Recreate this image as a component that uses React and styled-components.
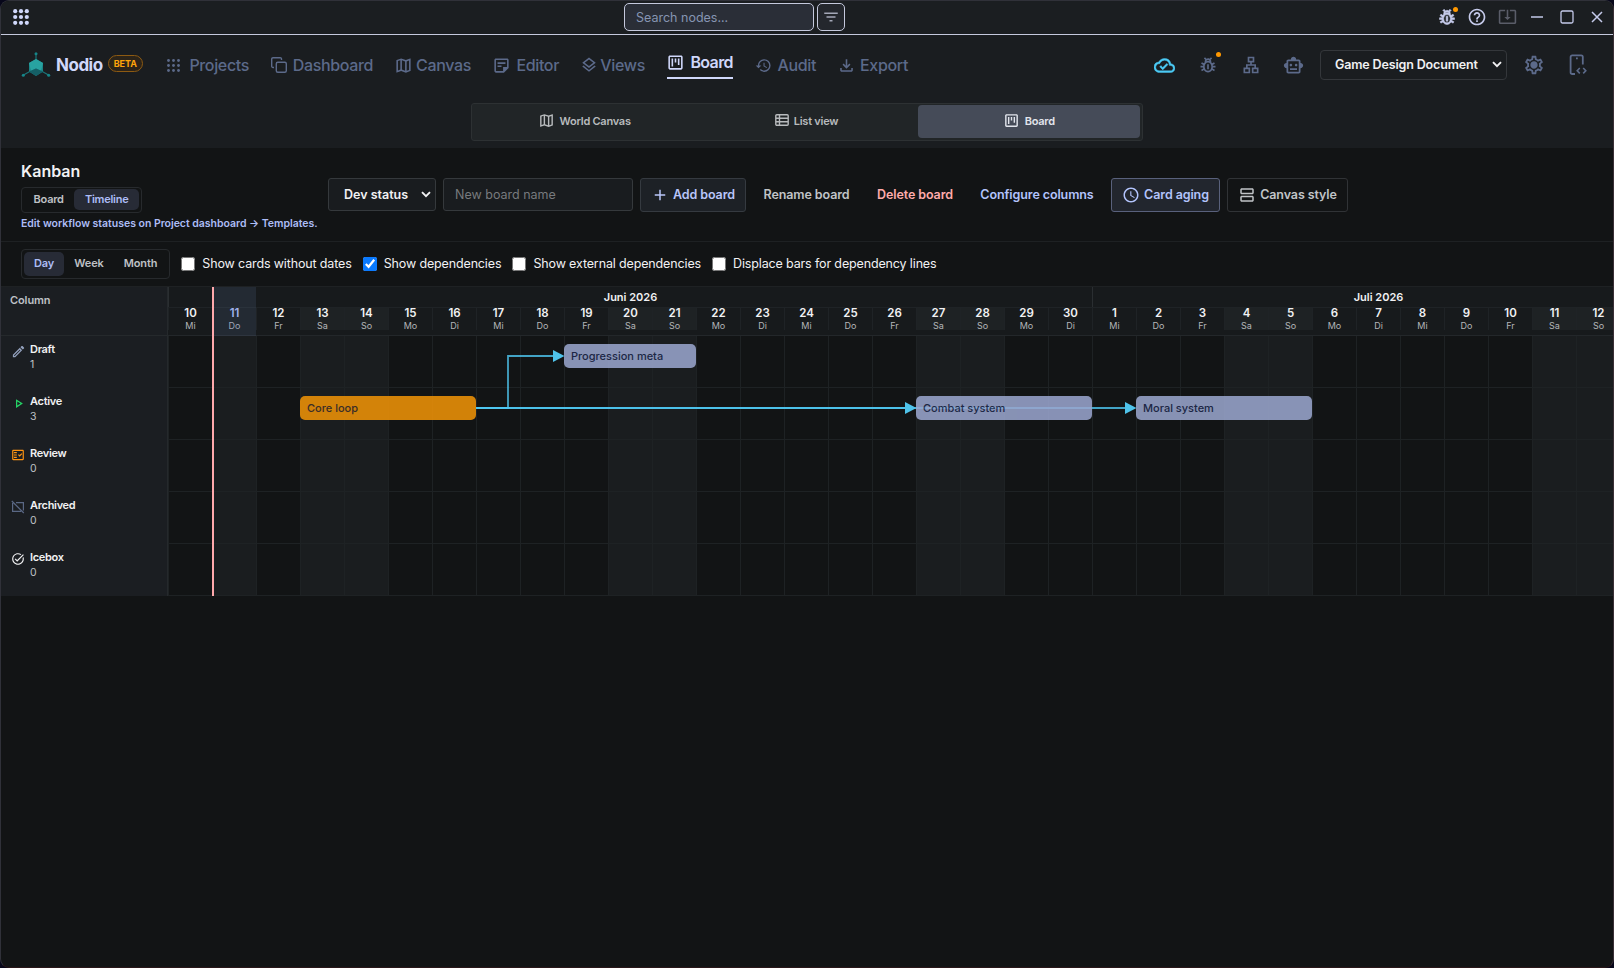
import styled, { createGlobalStyle } from "styled-components";
import {
  MdOutlineMap,
  MdOutlineStickyNote2,
  MdOutlineLayers,
  MdOutlineViewKanban,
  MdHistory,
  MdOutlineFileDownload,
  MdOutlinePestControl,
  MdHelpOutline,
  MdSystemUpdateAlt,
  MdOutlineCloudDone,
  MdOutlineLan,
  MdOutlineSmartToy,
  MdOutlineSettings,
  MdOutlineFactCheck,
  MdTaskAlt,
  MdOutlineEdit,
  MdOutlinePlayArrow,
  MdSchedule,
  MdOutlineViewAgenda,
  MdFilterList,
  MdAdd,
} from "react-icons/md";

const DAY_WIDTH = 44;
const ROW_HEIGHT = 52;
const WEEKDAYS = ["Mi", "Do", "Fr", "Sa", "So", "Mo", "Di"];

const days = Array.from({ length: 33 }, (_, i) => ({
  num: i < 21 ? i + 10 : i - 20,
  name: WEEKDAYS[i % 7],
  weekend: i % 7 === 3 || i % 7 === 4,
  today: i === 1,
}));

const AppsIcon = () => (
  <svg width="16" height="16" viewBox="0 0 16 16" fill="currentColor">
    {[2.2, 8, 13.8].map((y) =>
      [2.2, 8, 13.8].map((x) => <circle key={`${x}-${y}`} cx={x} cy={y} r="2.1" />)
    )}
  </svg>
);

const ProjectsIcon = () => (
  <svg width="14" height="13" viewBox="-1 0 14 13" fill="currentColor">
    {[1.5, 6.5, 11.5].map((y) =>
      [1.5, 6.5, 11.5].map((x) => <circle key={`${x}-${y}`} cx={x} cy={y} r="1.4" />)
    )}
  </svg>
);

const CopyIcon = () => (
  <svg width="16" height="16" viewBox="0 0 16 16" fill="none" stroke="currentColor" strokeWidth="1.4">
    <rect x="5.3" y="5.3" width="10" height="10" rx="1.5" />
    <path d="M3 10.5H2A1.3 1.3 0 0 1 .7 9.2V2A1.3 1.3 0 0 1 2 .7h7.2A1.3 1.3 0 0 1 10.5 2v1" />
  </svg>
);

const ListIcon = () => (
  <svg width="14" height="14" viewBox="0 0 14 14" fill="none" stroke="currentColor" strokeWidth="1.4">
    <rect x=".8" y="1.8" width="12.4" height="10.4" rx="1" />
    <path d="M1 5.3h12M1 8.7h12M4.5 2v10" />
  </svg>
);

const SettingsIcon = () => (
  <svg width="22" height="22" viewBox="0 0 22 22">
    <MdOutlineSettings size={22} />
    <circle cx="11" cy="11" r="3" fill="currentColor" />
  </svg>
);

const PhoneCodeIcon = () => (
  <svg width="18" height="22" viewBox="0 0 18 22" fill="none" stroke="currentColor" strokeWidth="1.8">
    <path d="M6 20H3.2A1.6 1.6 0 0 1 1.6 18.4V3A1.6 1.6 0 0 1 3.2 1.4h9A1.6 1.6 0 0 1 13.8 3v7.5" />
    <path d="M7 4.4h1.8M10.8 14l-2.6 2.7 2.6 2.7M14.2 14l2.6 2.7-2.6 2.7" strokeWidth="1.6" />
  </svg>
);

const ArchivedIcon = () => (
  <svg width="14" height="14" viewBox="0 0 14 14" fill="none" stroke="currentColor" strokeWidth="1.2">
    <path d="M5 2.6h7.4v8M10 11.4H1.6V2.9M.8 1l12 12" />
  </svg>
);

const Logo = () => (
  <svg width="30" height="26" viewBox="0 0 30 26">
    <path d="M15 2v8M15 16 2.5 23M15 16l12.5 7" stroke="#1b7478" strokeWidth="1.2" />
    <path d="m15 7 7 4v8.5L15 24l-7-4.5V11z" fill="#1b8587" />
    <path d="m15 7 7 4-2 8-5-2.5-5 2.5-2-8z" fill="#28a3a1" />
    <path d="m15 16.5 7 3-7 4.5-7-4.5z" fill="#155f66" />
    <circle cx="15" cy="1.8" r="1.5" fill="#168688" />
    <circle cx="2.3" cy="23.3" r="1.5" fill="#168688" />
    <circle cx="27.7" cy="23.3" r="1.5" fill="#168688" />
  </svg>
);

const Chevron = () => (
  <svg width="10" height="7" viewBox="0 0 10 7" fill="none" stroke="#f1f1f3" strokeWidth="1.9">
    <path d="m1 1.2 4 4 4-4" />
  </svg>
);

const navItems = [
  { label: "Projects", icon: <ProjectsIcon />, width: 83 },
  { label: "Dashboard", icon: <CopyIcon />, width: 102 },
  { label: "Canvas", icon: <MdOutlineMap size={19} />, width: 76, inset: true },
  { label: "Editor", icon: <MdOutlineStickyNote2 size={19} />, width: 66, inset: true },
  { label: "Views", icon: <MdOutlineLayers size={18} />, width: 64, inset: true },
  { label: "Board", icon: <MdOutlineViewKanban size={19} />, active: true, width: 66, inset: true },
  { label: "Audit", icon: <MdHistory size={17} />, width: 61 },
  { label: "Export", icon: <MdOutlineFileDownload size={19} />, width: 70, inset: true },
];

const rows = [
  { name: "Draft", count: 1, icon: <MdOutlineEdit size={15} />, color: "#93a1bd" },
  { name: "Active", count: 3, icon: <MdOutlinePlayArrow size={15} />, color: "#25d366" },
  { name: "Review", count: 0, icon: <MdOutlineFactCheck size={14} />, color: "#ff9412" },
  { name: "Archived", count: 0, icon: <ArchivedIcon />, color: "#5a6885" },
  { name: "Icebox", count: 0, icon: <MdTaskAlt size={14} />, color: "#f1f1f3" },
];

const bars = [
  { label: "Progression meta", row: 0, start: 9, length: 3 },
  { label: "Core loop", row: 1, start: 3, length: 4, active: true },
  { label: "Combat system", row: 1, start: 17, length: 4 },
  { label: "Moral system", row: 1, start: 22, length: 4 },
];

const options = [
  { label: "Show cards without dates" },
  { label: "Show dependencies", checked: true },
  { label: "Show external dependencies" },
  { label: "Displace bars for dependency lines" },
];

export default function App() {
  return (
    <>
      <GlobalStyle />
      <Window>
        <TitleBar>
          <AppsButton>
            <AppsIcon />
          </AppsButton>
          <SearchGroup>
            <SearchInput placeholder="Search nodes..." />
            <FilterButton>
              <MdFilterList size={18} />
            </FilterButton>
          </SearchGroup>
          <WindowControls>
            <IconCell $heavy>
              <MdOutlinePestControl size={20} />
              <Dot />
            </IconCell>
            <IconCell>
              <MdHelpOutline size={20} />
            </IconCell>
            <IconCell $dim>
              <MdSystemUpdateAlt size={19} />
            </IconCell>
            <IconCell>
              <svg width="12" height="2" viewBox="0 0 12 2">
                <path d="M0 1h12" stroke="currentColor" strokeWidth="1.5" />
              </svg>
            </IconCell>
            <IconCell>
              <svg width="14" height="14" viewBox="0 0 14 14" fill="none" stroke="currentColor" strokeWidth="1.3">
                <rect x="1" y="1" width="12" height="12" rx="1.5" />
              </svg>
            </IconCell>
            <IconCell>
              <svg width="12" height="12" viewBox="0 0 12 12" stroke="currentColor" strokeWidth="1.5">
                <path d="m1 1 10 10M11 1 1 11" />
              </svg>
            </IconCell>
          </WindowControls>
        </TitleBar>

        <Header>
          <NavRow>
            <Brand>
              <Logo />
              <BrandName>Nodio</BrandName>
              <Beta>BETA</Beta>
            </Brand>
            <Nav>
              {navItems.map((item) => (
                <NavItem key={item.label} $active={item.active} $width={item.width} $inset={item.inset}>
                  {item.icon}
                  <span>{item.label}</span>
                </NavItem>
              ))}
            </Nav>
            <Tools>
              <Tool $cloud>
                <MdOutlineCloudDone size={21} />
              </Tool>
              <Tool>
                <MdOutlinePestControl size={20} />
                <Dot $large />
              </Tool>
              <Tool>
                <MdOutlineLan size={20} />
              </Tool>
              <Tool>
                <MdOutlineSmartToy size={21} />
              </Tool>
              <ProjectSelect>
                Game Design Document
                <Chevron />
              </ProjectSelect>
              <Tool $wide>
                <SettingsIcon />
              </Tool>
              <Tool $wide>
                <PhoneCodeIcon />
              </Tool>
            </Tools>
          </NavRow>
          <ViewSwitch>
            <ViewTab>
              <MdOutlineMap size={17} />
              World Canvas
            </ViewTab>
            <ViewTab>
              <ListIcon />
              List view
            </ViewTab>
            <ViewTab $active>
              <MdOutlineViewKanban size={17} />
              Board
            </ViewTab>
          </ViewSwitch>
        </Header>

        <Toolbar>
          <TitleBlock>
            <Title>Kanban</Title>
            <Segment>
              <SegmentItem>Board</SegmentItem>
              <SegmentItem $active>Timeline</SegmentItem>
            </Segment>
            <TemplateLink>Edit workflow statuses on Project dashboard → Templates.</TemplateLink>
          </TitleBlock>
          <Actions>
            <BoardSelect>
              Dev status
              <Chevron />
            </BoardSelect>
            <NameInput placeholder="New board name" />
            <Action $kind="primary" $width={106}>
              <MdAdd size={18} />
              Add board
            </Action>
            <Action $kind="plain" $width={107}>Rename board</Action>
            <Action $kind="danger" $width={96}>Delete board</Action>
            <Action $kind="link" $width={134}>Configure columns</Action>
            <Action $kind="toggled" $width={109}>
              <MdSchedule size={18} />
              Card aging
            </Action>
            <Action $kind="outline" $width={121}>
              <MdOutlineViewAgenda size={18} />
              Canvas style
            </Action>
          </Actions>
        </Toolbar>

        <OptionsBar>
          <Segment $large>
            <SegmentItem $active $large>Day</SegmentItem>
            <SegmentItem $large>Week</SegmentItem>
            <SegmentItem $large>Month</SegmentItem>
          </Segment>
          {options.map((option) => (
            <Option key={option.label}>
              <input type="checkbox" defaultChecked={option.checked} />
              {option.label}
            </Option>
          ))}
        </OptionsBar>

        <Timeline>
          <Labels>
            <LabelsHead>Column</LabelsHead>
            {rows.map((row) => (
              <RowLabel key={row.name} $color={row.color}>
                <RowIcon>{row.icon}</RowIcon>
                <div>
                  <RowName>{row.name}</RowName>
                  <RowCount>{row.count}</RowCount>
                </div>
              </RowLabel>
            ))}
          </Labels>
          <Chart>
            <ChartHead>
              <Months>
                <Month $days={21}>Juni 2026</Month>
                <Month $days={13}>Juli 2026</Month>
              </Months>
              <DayRow>
                {days.map((day, index) => (
                  <DayHead key={index} $weekend={day.weekend} $today={day.today}>
                    <strong>{day.num}</strong>
                    <span>{day.name}</span>
                  </DayHead>
                ))}
              </DayRow>
            </ChartHead>
            <ChartBody>
              {rows.map((row) => (
                <GridRow key={row.name}>
                  {days.map((day, index) => (
                    <GridCell key={index} $shaded={day.weekend || day.today} />
                  ))}
                </GridRow>
              ))}
              <Links width="1445" height="260" viewBox="0 0 1445 260">
                <path d="M308 72h32V20h46" />
                <path d="M308 72h430" />
                <path d="M308 72h650" />
                <polygon points="385,14 396.5,20 385,26" />
                <polygon points="737,66 748.5,72 737,78" />
                <polygon points="957,66 968.5,72 957,78" />
              </Links>
              {bars.map((bar) => (
                <Bar
                  key={bar.label}
                  $active={bar.active}
                  style={{
                    left: bar.start * DAY_WIDTH,
                    top: bar.row * ROW_HEIGHT + 8,
                    width: bar.length * DAY_WIDTH,
                  }}
                >
                  {bar.label}
                </Bar>
              ))}
            </ChartBody>
            <TodayTint />
            <TodayLine />
          </Chart>
        </Timeline>
      </Window>
    </>
  );
}

const GlobalStyle = createGlobalStyle`
  * {
    box-sizing: border-box;
  }

  body {
    margin: 0;
    background: #07071a;
    color: #f1f1f3;
    font-family: Inter, sans-serif;
    overflow: hidden;
  }

  svg {
    display: block;
    flex-shrink: 0;
  }

  input {
    font-family: inherit;
  }
`;

const Window = styled.div`
  height: 968px;
  display: flex;
  flex-direction: column;
  border: 1px solid #303139;
  border-right-color: #3a2f36;
  border-bottom-color: #2a1719;
  border-radius: 9px;
  background: #121415;
  overflow: hidden;
`;

const TitleBar = styled.div`
  height: 34px;
  flex-shrink: 0;
  display: flex;
  align-items: center;
  padding-bottom: 2px;
  background: #1b1e21;
  border-bottom: 1px solid #c5c9dd;
`;

const AppsButton = styled.div`
  width: 623px;
  padding-left: 12px;
  color: #d0d8fb;
`;

const SearchGroup = styled.div`
  display: flex;
  gap: 3px;
`;

const SearchInput = styled.input`
  width: 190px;
  height: 28px;
  padding: 1px 10px 0 11px;
  border: 1px solid #c5c9dd;
  border-radius: 5px;
  background: #2a2e37;
  font-size: 12.5px;

  &::placeholder {
    color: #8695b2;
  }
`;

const FilterButton = styled.div`
  width: 28px;
  height: 28px;
  display: grid;
  place-items: center;
  border: 1px solid #c5c9dd;
  border-radius: 5px;
  background: #24272d;
  color: #a4a8b8;
`;

const WindowControls = styled.div`
  display: flex;
  margin-left: auto;
  padding-right: 1px;
`;

const IconCell = styled.div`
  position: relative;
  width: 30px;
  height: 24px;
  display: grid;
  place-items: center;
  color: ${({ $dim }) => ($dim ? "#5a5d69" : "#c5caea")};

  path:not([fill="none"]) {
    stroke: ${({ $heavy }) => ($heavy ? "currentColor" : "")};
    stroke-width: ${({ $heavy }) => ($heavy ? "0.7px" : "")};
  }
`;

const Dot = styled.span`
  position: absolute;
  top: ${({ $large }) => ($large ? "-3px" : "2px")};
  right: ${({ $large }) => ($large ? "8px" : "4px")};
  width: 5px;
  height: 5px;
  border-radius: 50%;
  background: #ff9800;
`;

const Header = styled.header`
  height: 113px;
  flex-shrink: 0;
  background: #1a1d20;
`;

const NavRow = styled.div`
  height: 60px;
  display: flex;
  align-items: center;
  padding: 0 13px 0 20px;
`;

const Brand = styled.div`
  display: flex;
  align-items: center;
  width: 145px;
`;

const BrandName = styled.span`
  margin-left: 5px;
  color: #d0d8fb;
  font-size: 17px;
  font-weight: 700;
  letter-spacing: -0.5px;
`;

const Beta = styled.span`
  height: 17px;
  margin: -3px 0 0 5px;
  padding: 0 5px;
  border: 1px solid #8d5a12;
  border-radius: 9px;
  background: #2c2419;
  color: #ffa50a;
  font-size: 9px;
  font-weight: 700;
  line-height: 15px;
`;

const Nav = styled.nav`
  display: flex;
  align-items: center;
  gap: 22px;
`;

const NavItem = styled.div`
  display: flex;
  align-items: center;
  justify-content: space-between;
  width: ${({ $width }) => $width}px;
  height: ${({ $active }) => ($active ? 28 : 27)}px;
  padding-bottom: ${({ $active }) => ($active ? "4px" : "0")};
  border-bottom: ${({ $active }) => ($active ? "2px solid #d0d8fb" : "none")};
  color: ${({ $active }) => ($active ? "#d0d8fb" : "#5c6a8a")};
  font-size: 16px;
  font-weight: ${({ $active }) => ($active ? 600 : 500)};
  letter-spacing: ${({ $active }) => ($active ? "-0.6px" : "-0.35px")};
  white-space: nowrap;

  svg {
    margin-left: ${({ $inset }) => ($inset ? "-1.5px" : "0")};
  }
`;

const Tools = styled.div`
  display: flex;
  align-items: center;
  margin-left: auto;
`;

const Tool = styled.div`
  position: relative;
  width: ${({ $wide }) => ($wide ? 44 : 43)}px;
  display: grid;
  place-items: center;
  color: ${({ $cloud }) => ($cloud ? "#4ccbf5" : "#5c6a8a")};

  path:not([fill="none"]) {
    stroke: ${({ $cloud }) => ($cloud ? "currentColor" : "")};
    stroke-width: ${({ $cloud }) => ($cloud ? "0.5px" : "")};
  }
`;

const ProjectSelect = styled.div`
  width: 187px;
  height: 30px;
  display: flex;
  align-items: center;
  justify-content: space-between;
  margin: 0 5px;
  padding: 0 4px 1px 14px;
  border: 1px solid #34373b;
  border-radius: 4px;
  font-size: 12.5px;
  font-weight: 600;
  letter-spacing: -0.15px;
`;

const ViewSwitch = styled.div`
  width: 672px;
  height: 38px;
  display: grid;
  grid-template-columns: repeat(3, 1fr);
  margin: 8px auto 0;
  padding: 1px 2px 2px 1px;
  border: 1px solid #2d3133;
  border-radius: 3px;
  background: #212527;
`;

const ViewTab = styled.div`
  display: flex;
  align-items: center;
  justify-content: center;
  gap: 5px;
  padding-bottom: 1px;
  border-radius: 4px;
  background: ${({ $active }) => ($active ? "#454b58" : "transparent")};
  color: ${({ $active }) => ($active ? "#e2e5ec" : "#b8bbbd")};
  font-size: 11px;
  font-weight: 600;
  letter-spacing: -0.25px;

  svg {
    margin-top: -2px;
  }
`;

const Toolbar = styled.div`
  height: 94px;
  flex-shrink: 0;
  display: flex;
  padding: 12px 20px 0;
  border-bottom: 1px solid #1e2123;
`;

const TitleBlock = styled.div`
  width: 307px;
  flex-shrink: 0;
`;

const Title = styled.h1`
  margin: 0 0 5px;
  font-size: 16px;
  font-weight: 600;
  line-height: 22px;
`;

const Segment = styled.div`
  width: fit-content;
  height: ${({ $large }) => ($large ? 30 : 26)}px;
  display: flex;
  padding: ${({ $large }) => ($large ? "2px" : "1px 2px 2px 1px")};
  border: 1px solid #272a2d;
  border-radius: 4px;
`;

const SegmentItem = styled.div`
  display: flex;
  align-items: center;
  padding: 0 ${({ $large }) => ($large ? 10 : 10.6)}px 1px;
  border-radius: 5px;
  background: ${({ $active }) => ($active ? "#272b36" : "transparent")};
  color: ${({ $active }) => ($active ? "#adbdf6" : "#bfc1c5")};
  font-size: 11px;
  font-weight: 600;
  letter-spacing: ${({ $large }) => ($large ? "-0.12px" : "-0.25px")};
`;

const TemplateLink = styled.div`
  margin-top: 4px;
  color: #adbdf6;
  font-size: 10.5px;
  font-weight: 600;
  letter-spacing: -0.02px;
  line-height: 14px;
  white-space: nowrap;
`;

const Actions = styled.div`
  display: flex;
  align-items: flex-start;
  gap: 7px;
  padding-top: 18px;
`;

const BoardSelect = styled.div`
  width: 108px;
  height: 33px;
  display: flex;
  align-items: center;
  justify-content: space-between;
  padding: 0 4px 0 15px;
  border: 1px solid #35393c;
  border-radius: 3px;
  background: #191c1f;
  font-size: 12.5px;
  font-weight: 600;
`;

const NameInput = styled.input`
  width: 190px;
  height: 33px;
  padding: 0 11px;
  border: 1px solid #35393c;
  border-radius: 3px;
  background: #191c1f;
  font-size: 12.5px;

  &::placeholder {
    color: #777a7d;
  }
`;

const actionColors = {
  primary: { text: "#b9c6fa", border: "#353a40", background: "#1d2126" },
  plain: { text: "#c1c4c7", border: "transparent", background: "transparent" },
  danger: { text: "#ffabab", border: "transparent", background: "transparent" },
  link: { text: "#b2c3fb", border: "transparent", background: "transparent" },
  toggled: { text: "#b2c3fb", border: "#59617c", background: "#22262e" },
  outline: { text: "#c1c4c7", border: "#303336", background: "transparent" },
};

const Action = styled.div`
  width: ${({ $width }) => $width}px;
  height: 34px;
  display: flex;
  align-items: center;
  justify-content: center;
  gap: 4px;
  padding-bottom: 1px;
  border: 1px solid ${({ $kind }) => actionColors[$kind].border};
  border-radius: 3px;
  background: ${({ $kind }) => actionColors[$kind].background};
  color: ${({ $kind }) => actionColors[$kind].text};
  font-size: 12.5px;
  font-weight: 600;
  letter-spacing: -0.1px;
  white-space: nowrap;
`;

const OptionsBar = styled.div`
  height: 45px;
  flex-shrink: 0;
  display: flex;
  align-items: center;
  gap: 11px;
  padding: 0 0 1px 20px;
  border-bottom: 1px solid #1e2123;
`;

const Option = styled.label`
  display: flex;
  align-items: center;
  gap: 7px;
  font-size: 12.5px;
  letter-spacing: -0.14px;
  white-space: nowrap;

  input {
    width: 14px;
    height: 14px;
    margin: 0;
    accent-color: #0a7aff;
  }
`;

const Timeline = styled.div`
  display: flex;
`;

const Labels = styled.div`
  width: 167px;
  flex-shrink: 0;
  background: #1b1e22;
  border-right: 1px solid #25292c;
`;

const LabelsHead = styled.div`
  height: 49px;
  padding: 6px 9px;
  border-bottom: 1px solid #25292c;
  color: #bfc1c5;
  font-size: 11px;
  font-weight: 600;
  letter-spacing: -0.1px;
`;

const RowLabel = styled.div`
  height: ${ROW_HEIGHT}px;
  display: flex;
  padding: 5px 0 0 9px;
  color: ${({ $color }) => $color};
`;

const RowIcon = styled.div`
  width: 20px;
  padding: 3px 0 0 1px;
`;

const RowName = styled.div`
  color: #f1f1f3;
  font-size: 11px;
  font-weight: 600;
  letter-spacing: -0.3px;
  line-height: 16px;
`;

const RowCount = styled.div`
  color: #bfc1c5;
  font-size: 10.5px;
  line-height: 16px;
`;

const Chart = styled.div`
  position: relative;
  flex: 1;
  overflow: hidden;
`;

const ChartHead = styled.div`
  height: 49px;
  background: #171a1c;
  border-bottom: 1px solid #23272a;
`;

const Months = styled.div`
  display: flex;
  height: 20px;
`;

const Month = styled.div`
  width: ${({ $days }) => $days * DAY_WIDTH}px;
  flex-shrink: 0;
  border-left: 1px solid #2a2e31;
  font-size: 11px;
  font-weight: 600;
  line-height: 20px;
  text-align: center;
`;

const DayRow = styled.div`
  display: flex;
`;

const DayHead = styled.div`
  width: ${DAY_WIDTH}px;
  height: 23px;
  flex-shrink: 0;
  display: flex;
  flex-direction: column;
  align-items: center;
  border-left: 1px solid #1f2326;
  border-top: 1px solid #1f2326;
  background: ${({ $weekend }) => ($weekend ? "#1e2224" : "transparent")};
  color: ${({ $today }) => ($today ? "#a9b9f5" : "#f1f1f3")};

  strong {
    font-size: 11.5px;
    font-weight: 600;
    line-height: 10px;
  }

  span {
    margin-top: 2px;
    color: ${({ $today }) => ($today ? "#a5acbd" : "#b4b6b9")};
    font-size: 9px;
    line-height: 11px;
  }
`;

const ChartBody = styled.div`
  position: relative;
`;

const GridRow = styled.div`
  display: flex;
  height: ${ROW_HEIGHT}px;
  border-bottom: 1px solid #1e2224;
`;

const GridCell = styled.div`
  width: ${DAY_WIDTH}px;
  flex-shrink: 0;
  border-left: 1px solid #1e2224;
  background: ${({ $shaded }) => ($shaded ? "#1a1d1f" : "transparent")};
`;

const Links = styled.svg`
  position: absolute;
  top: 0;
  left: 0;

  path {
    fill: none;
    stroke: #4fc8f2;
    stroke-width: 1.8;
    opacity: 0.8;
  }

  polygon {
    fill: #4fc3ea;
  }
`;

const Bar = styled.div`
  position: absolute;
  height: 24px;
  padding-left: 7px;
  border-radius: 5px;
  background: ${({ $active }) => ($active ? "#f29406" : "#9ba7cf")};
  color: ${({ $active }) => ($active ? "#40302a" : "#202a4c")};
  font-size: 11px;
  font-weight: 500;
  line-height: 24px;
  opacity: 0.86;
`;

const TodayTint = styled.div`
  position: absolute;
  top: 0;
  left: ${DAY_WIDTH}px;
  width: ${DAY_WIDTH}px;
  height: 49px;
  background: rgba(110, 140, 190, 0.14);
`;

const TodayLine = styled.div`
  position: absolute;
  top: 0;
  bottom: 0;
  left: ${DAY_WIDTH}px;
  width: 2px;
  background: #ffa9ac;
`;
